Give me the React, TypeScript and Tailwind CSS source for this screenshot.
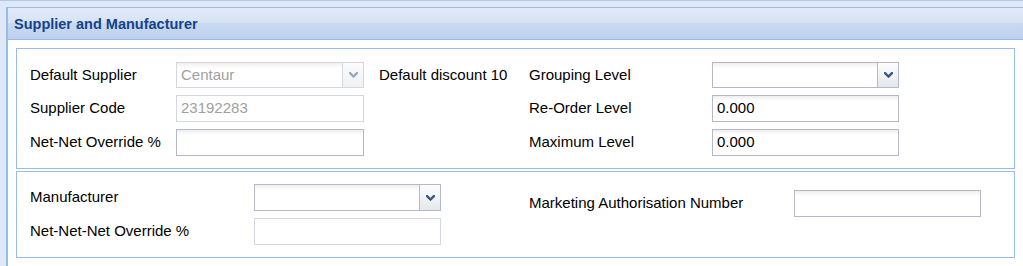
import React from "react";

const FONT = { fontFamily: '"Liberation Sans", Arial, sans-serif' };

function Chevron({ disabled }: { disabled?: boolean }) {
  return (
    <svg width="9" height="6" viewBox="0 0 9 6" className="block">
      <polyline
        points="1,1 4.5,4.5 8,1"
        fill="none"
        stroke={disabled ? "#9aa8bf" : "#3b5486"}
        strokeWidth="2.4"
        strokeLinecap="square"
      />
    </svg>
  );
}

function Combo({
  w,
  h,
  value,
  disabled,
}: {
  w: string;
  h: string;
  value?: string;
  disabled?: boolean;
}) {
  return (
    <div
      className={`flex ${w} ${h} border ${
        disabled ? "border-[#d3d8e0]" : "border-[#b5b8c8]"
      } bg-[linear-gradient(to_bottom,#eeeeee,#ffffff_5px)]`}
    >
      <div
        className={`flex-1 flex items-center pl-[4px] text-[15px] ${
          disabled ? "text-[#a0a0a0]" : "text-black"
        }`}
      >
        {value}
      </div>
      <div
        className={`w-[21px] flex items-center justify-center border-l ${
          disabled
            ? "border-[#d3d8e0] bg-[linear-gradient(to_bottom,#fbfbfc,#f0f1f4)]"
            : "border-[#b5b8c8] bg-[linear-gradient(to_bottom,#fdfdfe,#e4e7ec)]"
        }`}
      >
        <Chevron disabled={disabled} />
      </div>
    </div>
  );
}

function TextInput({
  w,
  h,
  value,
  disabled,
}: {
  w: string;
  h: string;
  value?: string;
  disabled?: boolean;
}) {
  return (
    <div
      className={`flex items-center ${w} ${h} border pl-[4px] text-[15px] ${
        disabled
          ? "border-[#d3d8e0] text-[#a0a0a0] bg-white"
          : "border-[#b5b8c8] text-black bg-[linear-gradient(to_bottom,#eeeeee,#ffffff_5px)]"
      }`}
    >
      {value}
    </div>
  );
}

function Label({ children }: { children: React.ReactNode }) {
  return (
    <div className="flex items-center text-[15px] text-black whitespace-nowrap">
      {children}
    </div>
  );
}

export default function App() {
  return (
    <div
      className="w-[1023px] h-[266px] overflow-hidden bg-[#dfe8f6] border-t border-[#b3c9ea] pt-[6px] pl-[6px]"
      style={FONT}
    >
      <div className="w-[1040px] h-[300px] bg-white border-t border-l-2 border-[#99bbe8]">
        <div className="h-[32px] border-b border-[#99bbe8] flex items-center pl-[6px] pt-[2px] bg-[linear-gradient(to_bottom,#e3ebf7_0%,#d6e3f4_46%,#c8daf1_50%,#bcd1ee_100%)]">
          <span className="text-[14.5px] font-bold text-[#15428b]">
            Supplier and Manufacturer
          </span>
        </div>
        <div className="pt-[8px] pl-[8px] flex flex-col gap-[2px]">
          <div className="w-[999px] h-[121px] border border-[#99bbe8] pt-[13px] pl-[13px]">
            <div className="grid grid-cols-[146px_188px_15px_150px_183px_187px] grid-rows-[26px_27px_27px] gap-y-[7px]">
              <Label>Default Supplier</Label>
              <Combo w="w-[188px]" h="h-[26px]" value="Centaur" disabled />
              <div />
              <Label>Default discount 10</Label>
              <Label>Grouping Level</Label>
              <Combo w="w-[187px]" h="h-[26px]" />

              <Label>Supplier Code</Label>
              <TextInput w="w-[188px]" h="h-[27px]" value="23192283" disabled />
              <div />
              <div />
              <Label>Re-Order Level</Label>
              <TextInput w="w-[187px]" h="h-[27px]" value="0.000" />

              <Label>Net-Net Override %</Label>
              <TextInput w="w-[188px]" h="h-[27px]" />
              <div />
              <div />
              <Label>Maximum Level</Label>
              <TextInput w="w-[187px]" h="h-[27px]" value="0.000" />
            </div>
          </div>
          <div className="w-[999px] h-[87px] border border-[#99bbe8] pt-[12px] pl-[13px] flex">
            <div className="grid grid-cols-[224px_187px] grid-rows-[27px_27px] gap-y-[7px]">
              <Label>Manufacturer</Label>
              <Combo w="w-[187px]" h="h-[27px]" />
              <Label>Net-Net-Net Override %</Label>
              <TextInput w="w-[187px]" h="h-[27px]" disabled />
            </div>
            <div className="ml-[88px] mt-[6px] flex h-[27px]">
              <div className="w-[265px] flex items-center">
                <Label>Marketing Authorisation Number</Label>
              </div>
              <TextInput w="w-[187px]" h="h-[27px]" />
            </div>
          </div>
        </div>
      </div>
    </div>
  );
}
